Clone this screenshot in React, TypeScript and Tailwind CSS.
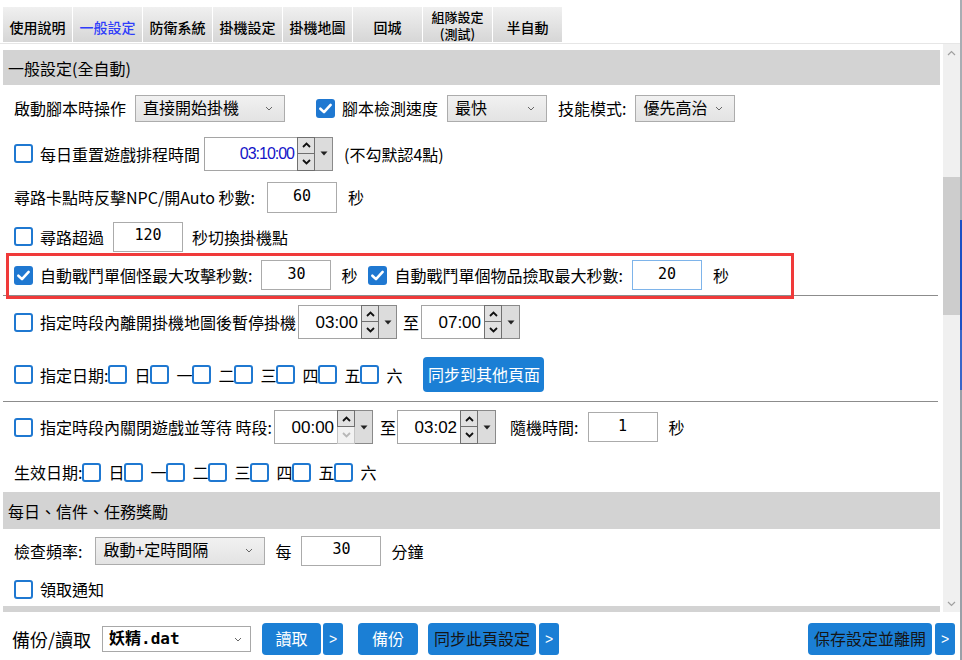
import React from "react";

const FONT = '"Noto Sans CJK TC", "Noto Sans", sans-serif';

function Check({ checked }: { checked?: boolean }) {
  return checked ? (
    <span className="w-[19px] h-[19px] rounded-[3px] bg-[#1f78d1] flex items-center justify-center shrink-0">
      <svg width="15" height="15" viewBox="0 0 14 14">
        <path d="M2.2 7.2 L5.6 10.4 L11.8 3.6" stroke="white" strokeWidth="2.4" fill="none" strokeLinecap="round" strokeLinejoin="round" />
      </svg>
    </span>
  ) : (
    <span className="w-[19px] h-[19px] rounded-[3px] border-2 border-[#1f78d1] bg-white shrink-0" />
  );
}

function SelChevron() {
  return (
    <svg width="8" height="5" viewBox="0 0 8 5" className="shrink-0">
      <path d="M1 1 L4 4 L7 1" stroke="#666" strokeWidth="1" fill="none" />
    </svg>
  );
}

function Select({ className, children }: { className: string; children: React.ReactNode }) {
  return (
    <div className={`border border-[#acacac] bg-gradient-to-b from-[#f1f1f1] to-[#e3e3e3] flex items-center justify-between pl-[7px] pr-[11px] shrink-0 ${className}`}>
      <span className="text-[16px] leading-none text-black pb-[3px]">{children}</span>
      <SelChevron />
    </div>
  );
}

function NumInput({ className, value }: { className: string; value: string }) {
  return (
    <div className={`bg-white flex items-center justify-center shrink-0 ${className}`}>
      <span className="text-[15px] leading-none text-black pb-[2px]" style={{ fontFamily: '"DejaVu Sans Mono", "Liberation Mono", monospace' }}>
        {value}
      </span>
    </div>
  );
}

function UpArrow({ color }: { color: string }) {
  return (
    <svg width="9" height="6" viewBox="0 0 9 6">
      <path d="M1 5 L4.5 1.5 L8 5" stroke={color} strokeWidth="1.8" fill="none" />
    </svg>
  );
}
function DownArrow({ color }: { color: string }) {
  return (
    <svg width="9" height="6" viewBox="0 0 9 6">
      <path d="M1 1 L4.5 4.5 L8 1" stroke={color} strokeWidth="1.8" fill="none" />
    </svg>
  );
}

function TimeBox({ fieldClass, value, small, downDisabled }: { fieldClass: string; value: string; small?: boolean; downDisabled?: boolean }) {
  return (
    <div className="flex h-[34px] shrink-0">
      <div className={`border border-[#a5a5a5] border-r-0 bg-white flex items-center justify-end pr-[3px] ${fieldClass}`}>
        {small ? (
          <span className="text-[16px] leading-none text-[#1414c8] tracking-[-1px]" style={{ fontFamily: '"Liberation Sans", Arial, sans-serif' }}>{value}</span>
        ) : (
          <span className="text-[17px] leading-none text-black" style={{ fontFamily: '"Liberation Sans", Arial, sans-serif' }}>{value}</span>
        )}
      </div>
      <div className="w-[18px] flex flex-col">
        <div className="h-[17px] border border-[#707070] bg-[#e1e1e1] flex items-center justify-center">
          <UpArrow color="#111" />
        </div>
        <div className={downDisabled ? "h-[17px] border border-[#c4c4c4] border-t-0 bg-[#f2f2f2] flex items-center justify-center" : "h-[17px] border border-[#707070] border-t-0 bg-[#e1e1e1] flex items-center justify-center"}>
          <DownArrow color={downDisabled ? "#b8b8b8" : "#111"} />
        </div>
      </div>
      <div className="w-[18px] border border-[#8a8a8a] border-l-0 bg-[#dcdcdc] flex items-center justify-center">
        <svg width="8" height="5" viewBox="0 0 8 5">
          <path d="M0.5 0.5 L4 4.5 L7.5 0.5 Z" fill="#222" />
        </svg>
      </div>
    </div>
  );
}

function T({ children, className }: { children: React.ReactNode; className?: string }) {
  return <span className={`text-[16px] leading-none text-black whitespace-nowrap shrink-0 ${className ?? ""}`}>{children}</span>;
}

function Days() {
  const days = ["日", "一", "二", "三", "四", "五", "六"];
  return (
    <div className="flex items-center">
      {days.map((d) => (
        <div key={d} className="flex items-center">
          <Check />
          <span className="ml-[7px] w-[16px] text-[16px] leading-none text-black">{d}</span>
        </div>
      ))}
    </div>
  );
}

const tabs = ["使用說明", "一般設定", "防衛系統", "掛機設定", "掛機地圖", "回城", "組隊設定\n(測試)", "半自動"];

export default function App() {
  return (
    <div className="w-[962px] h-[660px] bg-white flex overflow-hidden" style={{ fontFamily: FONT }}>
      <div className="w-[960px] flex flex-col">
        {/* Tabs */}
        <div className="h-[43px] flex items-start pt-[7px] pl-[3px] gap-px">
          {tabs.map((t, i) => (
            <div
              key={t}
              className="w-[69px] h-[35px] bg-gradient-to-b from-[#f0f0f0] to-[#d6d6d6] flex items-center justify-center pt-[4px]"
            >
              {t.includes("\n") ? (
                <div className="flex flex-col items-center text-[13px] leading-[17px] font-medium text-black -mt-[3px]">
                  <span className="leading-[17px]">組隊設定</span>
                  <span className="leading-[17px]">(測試)</span>
                </div>
              ) : (
                <span className={i === 1 ? "text-[14px] leading-none font-medium text-[#2f3dfa]" : "text-[14px] leading-none font-medium text-black"}>{t}</span>
              )}
            </div>
          ))}
        </div>

        {/* Content + scrollbar */}
        <div className="flex h-[569px] border-t border-[#e6e6e6]">
          <div className="w-[943px] px-[3px] pt-[6px] relative">
            <div className="h-[35px] bg-[#d3d3d3] flex items-center pl-[5px]">
              <T>一般設定(全自動)</T>
            </div>

            {/* Row 1 */}
            <div className="h-[46px] flex items-center pl-[11px]">
              <T>啟動腳本時操作</T>
              <Select className="ml-[9px] w-[150px] h-[27px]">直接開始掛機</Select>
              <span className="ml-[31px]"><Check checked /></span>
              <T className="ml-[7px]">腳本檢測速度</T>
              <Select className="ml-[9px] w-[100px] h-[27px]">最快</Select>
              <T className="ml-[11px]">技能模式:</T>
              <Select className="ml-[9px] w-[100px] h-[27px]">優先高治</Select>
            </div>

            {/* Row 2 */}
            <div className="h-[45px] flex items-center pl-[11px]">
              <Check />
              <T className="ml-[7px]">每日重置遊戲排程時間</T>
              <span className="ml-[4px]">
                <TimeBox fieldClass="w-[93px]" value="03:10:00" small />
              </span>
              <T className="ml-[11px]">(不勾默認4點)</T>
            </div>

            {/* Row 3 */}
            <div className="h-[42px] flex items-center pl-[11px]">
              <T>尋路卡點時反擊NPC/開Auto 秒數:</T>
              <NumInput className="ml-[12px] w-[70px] h-[31px] border border-[#ababab]" value="60" />
              <T className="ml-[11px]">秒</T>
            </div>

            {/* Row 4 */}
            <div className="h-[37px] flex items-center pl-[11px]">
              <Check />
              <T className="ml-[7px]">尋路超過</T>
              <NumInput className="ml-[9px] w-[70px] h-[30px] border border-[#ababab]" value="120" />
              <T className="ml-[9px]">秒切換掛機點</T>
            </div>

            {/* Row 5 */}
            <div className="h-[40px] flex items-center pl-[11px]">
              <Check checked />
              <T className="ml-[7px]">自動戰鬥單個怪最大攻擊秒數:</T>
              <NumInput className="ml-[9px] w-[70px] h-[30px] border border-[#ababab]" value="30" />
              <T className="ml-[10px]">秒</T>
              <span className="ml-[11px]"><Check checked /></span>
              <T className="ml-[7px]">自動戰鬥單個物品撿取最大秒數:</T>
              <NumInput className="ml-[9px] w-[70px] h-[30px] border border-[#7eb4ea]" value="20" />
              <T className="ml-[11px]">秒</T>
            </div>
            <div className="h-px bg-[#8c8c8c] w-[935px]" />

            {/* Row 6 */}
            <div className="h-[52px] flex items-center pl-[11px]">
              <Check />
              <T className="ml-[7px]">指定時段內離開掛機地圖後暫停掛機</T>
              <span className="ml-[2px]"><TimeBox fieldClass="w-[63px]" value="03:00" /></span>
              <T className="ml-[6px]">至</T>
              <span className="ml-[2px]"><TimeBox fieldClass="w-[63px]" value="07:00" /></span>
            </div>

            {/* Row 7 */}
            <div className="h-[53px] flex items-center pl-[11px]">
              <Check />
              <T className="ml-[7px]">指定日期:</T>
              <Days />
              <div className="ml-[21px] w-[121px] h-[35px] rounded-[4px] bg-[#1b7fd5] flex items-center justify-center">
                <span className="text-[16px] leading-none text-white pb-[2px]">同步到其他頁面</span>
              </div>
            </div>
            <div className="h-px bg-[#8c8c8c] w-[935px]" />

            {/* Row 8 */}
            <div className="h-[50px] flex items-center pl-[11px]">
              <Check />
              <T className="ml-[7px]">指定時段內關閉遊戲並等待 時段:</T>
              <span className="ml-[2px]"><TimeBox fieldClass="w-[63px]" value="00:00" downDisabled /></span>
              <T className="ml-[7px]">至</T>
              <span className="ml-[1px]"><TimeBox fieldClass="w-[63px]" value="03:02" /></span>
              <T className="ml-[14px]">隨機時間:</T>
              <NumInput className="ml-[9px] w-[70px] h-[30px] border border-[#ababab]" value="1" />
              <T className="ml-[11px]">秒</T>
            </div>

            {/* Row 9 */}
            <div className="h-[40px] flex items-center pl-[11px]">
              <T>生效日期:</T>
              <Days />
            </div>

            <div className="h-[37px] bg-[#d3d3d3] flex items-center pl-[5px]">
              <T>每日、信件、任務獎勵</T>
            </div>

            {/* Row 10 */}
            <div className="h-[43px] flex items-center pl-[11px]">
              <T>檢查頻率:</T>
              <Select className="ml-[13px] w-[170px] h-[28px]">啟動+定時間隔</Select>
              <T className="ml-[10px]">每</T>
              <NumInput className="ml-[10px] w-[80px] h-[30px] border border-[#ababab]" value="30" />
              <T className="ml-[10px]">分鐘</T>
            </div>

            {/* Row 11 */}
            <div className="h-[34px] flex items-center pl-[11px]">
              <Check />
              <T className="ml-[7px]">領取通知</T>
            </div>
            <div className="h-[6px] bg-[#d3d3d3]" />

            {/* red annotation box */}
            <div className="absolute left-[6px] top-[209px] w-[788px] h-[46px] border-[3px] border-[#f03a3a] pointer-events-none" />
          </div>

          {/* Scrollbar */}
          <div className="w-[17px] bg-[#f0f0f0] flex flex-col">
            <div className="h-[17px] flex items-center justify-center">
              <svg width="9" height="6" viewBox="0 0 9 6">
                <path d="M1 5 L4.5 1.5 L8 5" stroke="#a0a0a0" strokeWidth="1.2" fill="none" />
              </svg>
            </div>
            <div className="h-[116px]" />
            <div className="h-[138px] bg-[#cdcdcd]" />
            <div className="flex-1" />
            <div className="h-[17px] flex items-center justify-center">
              <svg width="9" height="6" viewBox="0 0 9 6">
                <path d="M1 1 L4.5 4.5 L8 1" stroke="#a0a0a0" strokeWidth="1.2" fill="none" />
              </svg>
            </div>
          </div>
        </div>

        {/* Bottom bar */}
        <div className="h-[48px] flex items-center pt-[6px] pl-[12px] pr-[5px]">
          <span className="text-[18px] leading-none text-black whitespace-nowrap">備份/讀取</span>
          <div className="ml-[11px] w-[149px] h-[26px] border border-[#a8a8a8] bg-white flex items-center justify-between pl-[6px] pr-[8px]">
            <span className="text-[16px] leading-none font-bold text-black pb-[2px]">
              妖精<span style={{ fontFamily: '"DejaVu Sans Mono", monospace' }}>.dat</span>
            </span>
            <SelChevron />
          </div>
          <div className="ml-[11px] w-[59px] h-[32px] rounded-[4px] bg-[#1b7fd5] flex items-center justify-center">
            <span className="text-[16px] leading-none text-white pb-[2px]">讀取</span>
          </div>
          <div className="ml-[2px] w-[20px] h-[32px] rounded-[3px] bg-[#1b7fd5] flex items-center justify-center">
            <span className="text-[14px] leading-none text-white" style={{ fontFamily: '"Liberation Sans", sans-serif' }}>&gt;</span>
          </div>
          <div className="ml-[15px] w-[60px] h-[32px] rounded-[4px] bg-[#1b7fd5] flex items-center justify-center">
            <span className="text-[16px] leading-none text-white pb-[2px]">備份</span>
          </div>
          <div className="ml-[10px] w-[108px] h-[32px] rounded-[4px] bg-[#1b7fd5] flex items-center justify-center">
            <span className="text-[16px] leading-none text-[#151515] pb-[2px]">同步此頁設定</span>
          </div>
          <div className="ml-[3px] w-[20px] h-[32px] rounded-[3px] bg-[#1b7fd5] flex items-center justify-center">
            <span className="text-[14px] leading-none text-white" style={{ fontFamily: '"Liberation Sans", sans-serif' }}>&gt;</span>
          </div>
          <div className="flex-1" />
          <div className="w-[124px] h-[32px] rounded-[4px] bg-[#1b7fd5] flex items-center justify-center">
            <span className="text-[16px] leading-none text-[#151515] pb-[2px]">保存設定並離開</span>
          </div>
          <div className="ml-[3px] w-[20px] h-[32px] rounded-[3px] bg-[#1b7fd5] flex items-center justify-center">
            <span className="text-[14px] leading-none text-white" style={{ fontFamily: '"Liberation Sans", sans-serif' }}>&gt;</span>
          </div>
        </div>
      </div>

      {/* desktop edge strip */}
      <div className="w-[2px] flex flex-col">
        <div className="h-[220px] bg-[#a9adb3]" />
        <div className="h-[110px] bg-[#1d4fc4]" />
        <div className="h-[60px] bg-[#3a66c8]" />
        <div className="flex-1 bg-[#9aa0a8]" />
      </div>
    </div>
  );
}
